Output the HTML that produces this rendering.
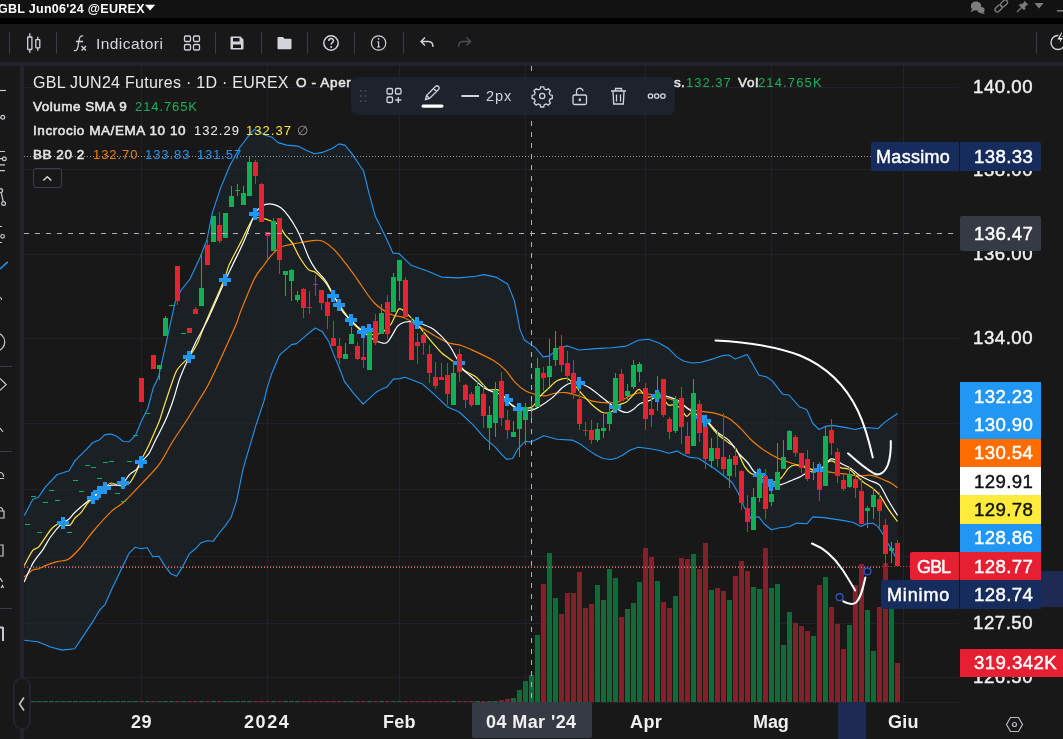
<!DOCTYPE html><html><head><meta charset="utf-8"><title>GBL</title><style>
*{box-sizing:border-box}
html,body{margin:0;padding:0}
body{width:1063px;height:739px;overflow:hidden;background:#181818;font-family:"Liberation Sans",sans-serif;color:#fff;position:relative}
.abs{position:absolute}
#g{position:absolute;left:0;top:0}
.dv{position:absolute;top:32px;width:1px;height:22px;background:#3a3c47}
.t{position:absolute;white-space:nowrap;will-change:transform}
.bx{position:absolute}
</style></head><body>
<div class="bx" style="left:0;top:0;width:1063px;height:18px;background:#121212"></div>
<div class="bx" style="left:0;top:18px;width:1063px;height:6px;background:#000"></div>
<div class="dv" style="left:9px"></div>
<div class="dv" style="left:56px"></div>
<div class="dv" style="left:215px"></div>
<div class="dv" style="left:261px"></div>
<div class="dv" style="left:307px"></div>
<div class="dv" style="left:354px"></div>
<div class="dv" style="left:403px"></div>
<div class="dv" style="left:1036px"></div>
<div class="bx" style="left:0;top:62px;width:1063px;height:4px;background:#23222d"></div><div class="bx" style="left:20px;top:62px;width:4px;height:677px;background:#23222d"></div>
<svg id="g" width="1063" height="739" viewBox="0 0 1063 739">
<defs><clipPath id="cp"><rect x="24" y="66" width="935" height="636"/></clipPath></defs>
<g clip-path="url(#cp)">
<polygon points="24.2,515.7 32.7,499.6 38.6,497.0 45.4,486.9 57.2,474.5 69.1,470.8 75.0,460.6 86.9,448.8 92.8,442.5 98.7,440.3 104.7,434.9 110.6,433.9 116.5,436.1 123.3,441.5 129.2,441.7 135.6,435.3 141.2,421.5 147.7,408.5 153.4,387.4 158.6,376.5 167.2,338.2 175.2,302.0 181.2,290.0 190.0,279.0 200.2,257.0 206.9,240.0 212.3,212.8 220.8,187.4 230.0,165.2 239.8,147.5 249.6,134.7 254.5,129.4 259.4,131.8 265.3,135.3 272.2,137.3 278.1,142.6 286.9,145.1 297.7,146.1 306.6,150.4 314.4,153.8 322.3,152.4 332.1,148.5 339.0,143.9 344.8,145.1 351.7,153.4 363.5,171.0 369.4,194.6 375.3,216.2 385.1,235.8 392.9,253.1 398.8,253.5 411.1,265.2 428.0,271.2 441.6,277.1 458.5,277.9 475.5,276.2 483.9,274.6 495.8,277.1 507.6,283.9 514.4,300.8 520.0,329.6 524.4,340.0 535.5,347.6 543.1,356.9 549.0,356.1 559.2,347.6 567.6,345.9 578.9,350.0 595.9,348.6 611.1,347.8 626.4,346.1 638.2,340.2 648.4,339.3 658.5,342.7 668.7,348.6 677.1,357.1 683.9,361.3 692.4,363.0 700.9,362.2 712.4,359.1 722.8,355.6 729.0,355.0 735.2,359.1 747.2,354.6 759.0,375.3 766.2,376.7 772.4,380.9 782.8,394.3 789.0,395.0 799.3,406.7 806.6,409.4 812.8,423.3 819.0,429.5 825.2,426.4 832.4,425.4 844.9,427.4 855.2,429.5 863.5,427.4 878.0,428.5 885.2,421.9 897.5,413.5 897.5,561.0 891.6,549.4 887.4,542.6 882.3,533.3 878.0,526.6 873.0,523.2 866.2,523.7 861.1,526.6 852.7,522.3 840.8,520.1 823.9,517.6 812.9,516.9 806.8,523.8 796.7,523.1 789.1,526.8 779.7,527.7 771.3,529.7 764.5,524.3 758.6,516.7 751.0,518.4 744.2,507.4 738.3,493.0 732.3,482.8 723.9,476.0 715.4,469.3 706.9,463.8 698.5,458.3 690.0,457.4 683.9,455.0 677.1,451.1 668.7,453.3 658.5,450.2 648.4,448.5 638.2,447.2 629.7,450.2 623.0,455.0 617.0,458.0 611.0,459.5 603.0,458.5 595.9,455.0 589.1,450.6 580.6,444.3 572.2,440.1 556.9,439.2 543.9,435.7 531.2,442.1 525.3,441.3 517.7,449.2 512.6,458.5 506.7,459.4 501.6,454.3 494.8,446.7 484.7,438.2 472.8,424.7 459.3,412.0 447.4,406.9 433.9,394.2 422.0,383.7 405.1,377.3 400.0,378.6 393.4,379.1 387.0,386.9 381.9,388.9 375.4,392.8 363.1,404.1 353.6,393.3 344.6,381.7 338.2,365.0 333.9,355.1 328.8,341.6 322.1,331.4 315.3,328.0 306.8,334.8 296.7,343.6 291.6,344.6 281.4,353.4 279.0,356.2 271.5,374.3 267.4,386.9 264.0,401.0 255.9,425.4 243.0,469.1 236.8,500.0 231.2,517.3 225.6,525.4 219.7,532.5 213.3,541.2 207.0,540.7 201.1,542.7 195.5,548.8 189.2,553.9 182.8,566.6 176.7,576.3 170.9,573.8 165.0,566.1 158.9,556.2 152.8,556.7 147.2,547.8 140.8,548.8 135.0,547.3 128.9,553.4 118.0,576.3 111.6,589.5 105.2,604.3 99.4,610.4 93.8,620.1 81.0,639.4 74.7,648.8 62.0,650.1 50.5,647.0 37.8,641.7 24.2,640.2" fill="#1b2025"/>
<g stroke="#22212c" stroke-width="1" shape-rendering="crispEdges">
<line x1="24" x2="959" y1="87.5" y2="87.5"/>
<line x1="24" x2="959" y1="169.5" y2="169.5"/>
<line x1="24" x2="959" y1="254.5" y2="254.5"/>
<line x1="24" x2="959" y1="338.5" y2="338.5"/>
<line x1="24" x2="959" y1="423.5" y2="423.5"/>
<line x1="24" x2="959" y1="489.5" y2="489.5"/>
<line x1="24" x2="959" y1="556.5" y2="556.5"/>
<line x1="24" x2="959" y1="623.5" y2="623.5"/>
<line x1="24" x2="959" y1="677.5" y2="677.5"/>
<line x1="141.5" x2="141.5" y1="66" y2="702"/>
<line x1="267.5" x2="267.5" y1="66" y2="702"/>
<line x1="399.5" x2="399.5" y1="66" y2="702"/>
<line x1="525.5" x2="525.5" y1="66" y2="702"/>
<line x1="645.5" x2="645.5" y1="66" y2="702"/>
<line x1="771.5" x2="771.5" y1="66" y2="702"/>
<line x1="903.5" x2="903.5" y1="66" y2="702"/>
</g>
<g shape-rendering="crispEdges">
<rect x="25" y="701" width="5" height="1" fill="#12693a"/>
<rect x="31" y="701" width="5" height="1" fill="#12693a"/>
<rect x="37" y="701" width="5" height="1" fill="#12693a"/>
<rect x="43" y="701" width="5" height="1" fill="#12693a"/>
<rect x="49" y="701" width="5" height="1" fill="#12693a"/>
<rect x="55" y="701" width="5" height="1" fill="#12693a"/>
<rect x="61" y="701" width="5" height="1" fill="#12693a"/>
<rect x="67" y="701" width="5" height="1" fill="#12693a"/>
<rect x="73" y="701" width="5" height="1" fill="#12693a"/>
<rect x="79" y="701" width="5" height="1" fill="#12693a"/>
<rect x="85" y="701" width="5" height="1" fill="#12693a"/>
<rect x="91" y="701" width="5" height="1" fill="#12693a"/>
<rect x="97" y="701" width="5" height="1" fill="#12693a"/>
<rect x="103" y="701" width="5" height="1" fill="#12693a"/>
<rect x="109" y="701" width="5" height="1" fill="#12693a"/>
<rect x="115" y="701" width="5" height="1" fill="#12693a"/>
<rect x="121" y="701" width="5" height="1" fill="#12693a"/>
<rect x="127" y="701" width="5" height="1" fill="#12693a"/>
<rect x="133" y="701" width="5" height="1" fill="#12693a"/>
<rect x="139" y="701" width="5" height="1" fill="#82202b"/>
<rect x="145" y="701" width="5" height="1" fill="#12693a"/>
<rect x="151" y="701" width="5" height="1" fill="#82202b"/>
<rect x="157" y="701" width="5" height="1" fill="#12693a"/>
<rect x="163" y="701" width="5" height="1" fill="#12693a"/>
<rect x="169" y="701" width="5" height="1" fill="#12693a"/>
<rect x="175" y="701" width="5" height="1" fill="#82202b"/>
<rect x="181" y="701" width="5" height="1" fill="#12693a"/>
<rect x="187" y="701" width="5" height="1" fill="#82202b"/>
<rect x="193" y="701" width="5" height="1" fill="#82202b"/>
<rect x="199" y="701" width="5" height="1" fill="#12693a"/>
<rect x="205" y="701" width="5" height="1" fill="#82202b"/>
<rect x="211" y="701" width="5" height="1" fill="#12693a"/>
<rect x="217" y="701" width="5" height="1" fill="#82202b"/>
<rect x="223" y="701" width="5" height="1" fill="#12693a"/>
<rect x="229" y="701" width="5" height="1" fill="#12693a"/>
<rect x="235" y="701" width="5" height="1" fill="#12693a"/>
<rect x="241" y="701" width="5" height="1" fill="#12693a"/>
<rect x="247" y="701" width="5" height="1" fill="#12693a"/>
<rect x="253" y="701" width="5" height="1" fill="#82202b"/>
<rect x="259" y="701" width="5" height="1" fill="#82202b"/>
<rect x="265" y="701" width="5" height="1" fill="#82202b"/>
<rect x="271" y="701" width="5" height="1" fill="#12693a"/>
<rect x="277" y="701" width="5" height="1" fill="#82202b"/>
<rect x="283" y="701" width="5" height="1" fill="#12693a"/>
<rect x="289" y="701" width="5" height="1" fill="#12693a"/>
<rect x="295" y="701" width="5" height="1" fill="#12693a"/>
<rect x="301" y="701" width="5" height="1" fill="#82202b"/>
<rect x="307" y="701" width="5" height="1" fill="#82202b"/>
<rect x="313" y="701" width="5" height="1" fill="#82202b"/>
<rect x="319" y="701" width="5" height="1" fill="#82202b"/>
<rect x="325" y="701" width="5" height="1" fill="#82202b"/>
<rect x="331" y="701" width="5" height="1" fill="#82202b"/>
<rect x="337" y="701" width="5" height="1" fill="#82202b"/>
<rect x="343" y="701" width="5" height="1" fill="#12693a"/>
<rect x="349" y="701" width="5" height="1" fill="#12693a"/>
<rect x="355" y="701" width="5" height="1" fill="#82202b"/>
<rect x="361" y="701" width="5" height="1" fill="#82202b"/>
<rect x="367" y="701" width="5" height="1" fill="#12693a"/>
<rect x="373" y="701" width="5" height="1" fill="#82202b"/>
<rect x="379" y="701" width="5" height="1" fill="#12693a"/>
<rect x="385" y="701" width="5" height="1" fill="#82202b"/>
<rect x="391" y="701" width="5" height="1" fill="#12693a"/>
<rect x="397" y="701" width="5" height="1" fill="#12693a"/>
<rect x="403" y="701" width="5" height="1" fill="#82202b"/>
<rect x="409" y="701" width="5" height="1" fill="#82202b"/>
<rect x="415" y="701" width="5" height="1" fill="#82202b"/>
<rect x="421" y="701" width="5" height="1" fill="#82202b"/>
<rect x="427" y="701" width="5" height="1" fill="#82202b"/>
<rect x="433" y="701" width="5" height="1" fill="#82202b"/>
<rect x="439" y="701" width="5" height="1" fill="#82202b"/>
<rect x="445" y="701" width="5" height="1" fill="#82202b"/>
<rect x="451" y="701" width="5" height="1" fill="#12693a"/>
<rect x="457" y="701" width="5" height="1" fill="#82202b"/>
<rect x="463" y="701" width="5" height="1" fill="#82202b"/>
<rect x="469" y="701" width="5" height="1" fill="#82202b"/>
<rect x="475" y="701" width="5" height="1" fill="#12693a"/>
<rect x="481" y="701" width="5" height="1" fill="#82202b"/>
<rect x="487" y="701" width="5" height="1" fill="#12693a"/>
<rect x="493" y="701" width="5" height="1" fill="#12693a"/>
<rect x="499" y="700" width="5" height="2" fill="#82202b"/>
<rect x="505" y="699" width="5" height="3" fill="#82202b"/>
<rect x="511" y="698" width="5" height="4" fill="#12693a"/>
<rect x="517" y="690" width="5" height="12" fill="#12693a"/>
<rect x="523" y="681" width="5" height="21" fill="#12693a"/>
<rect x="529" y="675" width="5" height="27" fill="#12693a"/>
<rect x="535" y="635" width="5" height="67" fill="#12693a"/>
<rect x="541" y="584" width="5" height="118" fill="#82202b"/>
<rect x="547" y="553" width="5" height="149" fill="#12693a"/>
<rect x="553" y="598" width="5" height="104" fill="#12693a"/>
<rect x="559" y="614" width="5" height="88" fill="#82202b"/>
<rect x="565" y="593" width="5" height="109" fill="#82202b"/>
<rect x="571" y="593" width="5" height="109" fill="#82202b"/>
<rect x="577" y="572" width="5" height="130" fill="#82202b"/>
<rect x="583" y="608" width="5" height="94" fill="#82202b"/>
<rect x="589" y="604" width="5" height="98" fill="#82202b"/>
<rect x="595" y="585" width="5" height="117" fill="#12693a"/>
<rect x="601" y="600" width="5" height="102" fill="#12693a"/>
<rect x="607" y="569" width="5" height="133" fill="#12693a"/>
<rect x="613" y="578" width="5" height="124" fill="#12693a"/>
<rect x="619" y="617" width="5" height="85" fill="#82202b"/>
<rect x="625" y="609" width="5" height="93" fill="#12693a"/>
<rect x="631" y="603" width="5" height="99" fill="#12693a"/>
<rect x="637" y="582" width="5" height="120" fill="#12693a"/>
<rect x="643" y="548" width="5" height="154" fill="#82202b"/>
<rect x="649" y="557" width="5" height="145" fill="#82202b"/>
<rect x="655" y="581" width="5" height="121" fill="#12693a"/>
<rect x="661" y="602" width="5" height="100" fill="#82202b"/>
<rect x="667" y="608" width="5" height="94" fill="#82202b"/>
<rect x="673" y="596" width="5" height="106" fill="#12693a"/>
<rect x="679" y="558" width="5" height="144" fill="#82202b"/>
<rect x="685" y="559" width="5" height="143" fill="#82202b"/>
<rect x="691" y="554" width="5" height="148" fill="#12693a"/>
<rect x="697" y="569" width="5" height="133" fill="#82202b"/>
<rect x="703" y="543" width="5" height="159" fill="#82202b"/>
<rect x="709" y="590" width="5" height="112" fill="#12693a"/>
<rect x="715" y="588" width="5" height="114" fill="#82202b"/>
<rect x="721" y="591" width="5" height="111" fill="#82202b"/>
<rect x="727" y="600" width="5" height="102" fill="#12693a"/>
<rect x="733" y="576" width="5" height="126" fill="#82202b"/>
<rect x="739" y="561" width="5" height="141" fill="#82202b"/>
<rect x="745" y="571" width="5" height="131" fill="#82202b"/>
<rect x="751" y="587" width="5" height="115" fill="#12693a"/>
<rect x="757" y="589" width="5" height="113" fill="#12693a"/>
<rect x="763" y="548" width="5" height="154" fill="#82202b"/>
<rect x="769" y="588" width="5" height="114" fill="#12693a"/>
<rect x="775" y="584" width="5" height="118" fill="#12693a"/>
<rect x="781" y="645" width="5" height="57" fill="#12693a"/>
<rect x="787" y="612" width="5" height="90" fill="#12693a"/>
<rect x="793" y="623" width="5" height="79" fill="#82202b"/>
<rect x="799" y="626" width="5" height="76" fill="#82202b"/>
<rect x="805" y="631" width="5" height="71" fill="#82202b"/>
<rect x="811" y="636" width="5" height="66" fill="#12693a"/>
<rect x="817" y="585" width="5" height="117" fill="#82202b"/>
<rect x="823" y="577" width="5" height="125" fill="#12693a"/>
<rect x="829" y="607" width="5" height="95" fill="#82202b"/>
<rect x="835" y="624" width="5" height="78" fill="#82202b"/>
<rect x="841" y="649" width="5" height="53" fill="#82202b"/>
<rect x="847" y="625" width="5" height="77" fill="#12693a"/>
<rect x="853" y="585" width="5" height="117" fill="#82202b"/>
<rect x="859" y="564" width="5" height="138" fill="#82202b"/>
<rect x="865" y="610" width="5" height="92" fill="#12693a"/>
<rect x="871" y="651" width="5" height="51" fill="#12693a"/>
<rect x="877" y="607" width="5" height="95" fill="#82202b"/>
<rect x="883" y="563" width="5" height="139" fill="#82202b"/>
<rect x="889" y="607" width="5" height="95" fill="#12693a"/>
<rect x="895" y="663" width="5" height="39" fill="#82202b"/>
</g>
<polyline points="24.2,515.7 32.7,499.6 38.6,497.0 45.4,486.9 57.2,474.5 69.1,470.8 75.0,460.6 86.9,448.8 92.8,442.5 98.7,440.3 104.7,434.9 110.6,433.9 116.5,436.1 123.3,441.5 129.2,441.7 135.6,435.3 141.2,421.5 147.7,408.5 153.4,387.4 158.6,376.5 167.2,338.2 175.2,302.0 181.2,290.0 190.0,279.0 200.2,257.0 206.9,240.0 212.3,212.8 220.8,187.4 230.0,165.2 239.8,147.5 249.6,134.7 254.5,129.4 259.4,131.8 265.3,135.3 272.2,137.3 278.1,142.6 286.9,145.1 297.7,146.1 306.6,150.4 314.4,153.8 322.3,152.4 332.1,148.5 339.0,143.9 344.8,145.1 351.7,153.4 363.5,171.0 369.4,194.6 375.3,216.2 385.1,235.8 392.9,253.1 398.8,253.5 411.1,265.2 428.0,271.2 441.6,277.1 458.5,277.9 475.5,276.2 483.9,274.6 495.8,277.1 507.6,283.9 514.4,300.8 520.0,329.6 524.4,340.0 535.5,347.6 543.1,356.9 549.0,356.1 559.2,347.6 567.6,345.9 578.9,350.0 595.9,348.6 611.1,347.8 626.4,346.1 638.2,340.2 648.4,339.3 658.5,342.7 668.7,348.6 677.1,357.1 683.9,361.3 692.4,363.0 700.9,362.2 712.4,359.1 722.8,355.6 729.0,355.0 735.2,359.1 747.2,354.6 759.0,375.3 766.2,376.7 772.4,380.9 782.8,394.3 789.0,395.0 799.3,406.7 806.6,409.4 812.8,423.3 819.0,429.5 825.2,426.4 832.4,425.4 844.9,427.4 855.2,429.5 863.5,427.4 878.0,428.5 885.2,421.9 897.5,413.5" fill="none" stroke="#2196f3" stroke-width="1.1" stroke-linejoin="round"/>
<polyline points="24.2,640.2 37.8,641.7 50.5,647.0 62.0,650.1 74.7,648.8 81.0,639.4 93.8,620.1 99.4,610.4 105.2,604.3 111.6,589.5 118.0,576.3 128.9,553.4 135.0,547.3 140.8,548.8 147.2,547.8 152.8,556.7 158.9,556.2 165.0,566.1 170.9,573.8 176.7,576.3 182.8,566.6 189.2,553.9 195.5,548.8 201.1,542.7 207.0,540.7 213.3,541.2 219.7,532.5 225.6,525.4 231.2,517.3 236.8,500.0 243.0,469.1 255.9,425.4 264.0,401.0 267.4,386.9 271.5,374.3 279.0,356.2 281.4,353.4 291.6,344.6 296.7,343.6 306.8,334.8 315.3,328.0 322.1,331.4 328.8,341.6 333.9,355.1 338.2,365.0 344.6,381.7 353.6,393.3 363.1,404.1 375.4,392.8 381.9,388.9 387.0,386.9 393.4,379.1 400.0,378.6 405.1,377.3 422.0,383.7 433.9,394.2 447.4,406.9 459.3,412.0 472.8,424.7 484.7,438.2 494.8,446.7 501.6,454.3 506.7,459.4 512.6,458.5 517.7,449.2 525.3,441.3 531.2,442.1 543.9,435.7 556.9,439.2 572.2,440.1 580.6,444.3 589.1,450.6 595.9,455.0 603.0,458.5 611.0,459.5 617.0,458.0 623.0,455.0 629.7,450.2 638.2,447.2 648.4,448.5 658.5,450.2 668.7,453.3 677.1,451.1 683.9,455.0 690.0,457.4 698.5,458.3 706.9,463.8 715.4,469.3 723.9,476.0 732.3,482.8 738.3,493.0 744.2,507.4 751.0,518.4 758.6,516.7 764.5,524.3 771.3,529.7 779.7,527.7 789.1,526.8 796.7,523.1 806.8,523.8 812.9,516.9 823.9,517.6 840.8,520.1 852.7,522.3 861.1,526.6 866.2,523.7 873.0,523.2 878.0,526.6 882.3,533.3 887.4,542.6 891.6,549.4 897.5,561.0" fill="none" stroke="#2196f3" stroke-width="1.1" stroke-linejoin="round"/>
<path d="M24.2,577.0 C25.6,575.8 30.2,571.4 32.7,570.0 C35.2,568.6 36.9,569.4 39.0,568.7 C41.1,568.0 42.4,566.8 45.4,565.6 C48.4,564.4 53.1,562.7 56.9,561.6 C60.7,560.5 64.3,561.7 68.3,559.3 C72.3,556.9 76.8,551.8 81.0,547.0 C85.2,542.2 88.7,536.4 93.8,530.5 C98.9,524.6 106.5,516.1 111.4,511.4 C116.3,506.7 118.4,507.0 123.3,502.5 C128.2,498.0 135.1,490.6 141.0,484.3 C146.9,478.0 153.6,471.9 158.8,464.9 C164.0,457.8 167.7,449.5 172.4,442.0 C177.1,434.5 182.5,426.8 186.8,420.0 C191.2,413.2 194.9,406.9 198.5,401.0 C202.1,395.1 204.4,392.3 208.3,384.8 C212.2,377.3 217.3,366.0 221.8,356.2 C226.3,346.4 232.2,333.6 235.4,326.1 C238.6,318.6 237.7,319.0 240.8,311.1 C244.0,303.2 250.4,286.6 254.3,278.9 C258.2,271.2 261.1,269.0 264.0,265.0 C266.9,261.0 268.6,258.1 271.6,255.1 C274.6,252.0 277.3,248.7 281.8,246.7 C286.3,244.7 292.8,244.1 298.4,243.0 C304.0,241.9 311.1,240.5 315.3,240.3 C319.5,240.1 320.7,240.2 323.8,241.7 C326.9,243.2 330.2,245.6 333.9,249.3 C337.6,253.0 342.0,258.8 345.8,263.7 C349.6,268.6 352.2,272.3 356.9,278.8 C361.6,285.3 368.2,296.6 373.9,302.5 C379.5,308.4 385.7,311.8 390.8,314.3 C395.9,316.8 400.1,316.0 404.3,317.7 C408.5,319.4 411.4,321.7 416.2,324.5 C421.0,327.3 427.7,331.6 433.1,334.7 C438.5,337.8 443.6,341.0 448.4,342.8 C453.2,344.6 457.3,344.2 461.9,345.7 C466.5,347.2 471.0,349.5 476.2,351.9 C481.4,354.3 488.3,357.4 493.1,360.3 C497.9,363.2 501.3,365.9 505.0,369.6 C508.7,373.3 511.7,378.8 515.1,382.3 C518.5,385.8 521.9,388.8 525.3,390.8 C528.7,392.8 532.1,393.6 535.5,394.5 C538.9,395.4 542.6,396.1 545.6,395.9 C548.6,395.7 550.2,394.1 553.5,393.5 C556.8,392.9 561.2,392.2 565.4,392.6 C569.6,393.0 574.4,394.6 578.9,396.0 C583.4,397.4 587.7,400.0 592.5,401.1 C597.3,402.2 603.5,402.7 607.7,402.8 C611.9,402.9 614.2,403.1 617.9,402.0 C621.6,400.9 626.3,397.5 629.7,396.0 C633.1,394.5 635.1,393.3 638.2,393.0 C641.3,392.7 644.5,393.4 648.4,394.0 C652.3,394.6 657.4,395.7 661.9,396.9 C666.4,398.1 671.0,399.1 675.5,401.1 C680.0,403.1 684.6,407.0 689.0,408.7 C693.4,410.4 697.5,410.6 701.9,411.4 C706.3,412.2 710.9,412.2 715.4,413.4 C719.9,414.6 724.7,416.0 728.9,418.5 C733.1,421.0 736.8,424.8 740.8,428.6 C744.8,432.4 748.6,437.6 752.6,441.3 C756.6,445.0 760.3,447.8 764.5,450.6 C768.7,453.4 773.8,456.3 778.0,458.3 C782.2,460.3 785.9,461.1 789.9,462.5 C793.9,463.9 798.1,465.6 801.8,466.7 C805.5,467.8 808.2,468.5 811.9,469.3 C815.6,470.1 819.8,470.7 823.8,471.3 C827.8,471.9 831.6,472.5 835.6,473.0 C839.6,473.5 843.5,473.8 847.5,474.3 C851.5,474.8 855.5,475.9 859.3,476.0 C863.0,476.1 867.0,475.0 870.0,475.2 C873.0,475.4 874.7,476.2 877.0,477.0 C879.3,477.8 881.6,478.9 884.0,480.0 C886.4,481.1 889.4,482.1 891.6,483.4 C893.9,484.7 896.5,487.1 897.5,487.8" fill="none" stroke="#f57c00" stroke-width="1.2" stroke-linejoin="round"/>
<path d="M24.2,565.6 C25.2,563.8 31.0,552.6 32.7,550.4 C34.4,548.2 36.9,549.0 39.0,546.6 C41.1,544.2 48.3,532.6 50.5,530.0 C52.7,527.4 56.0,524.7 58.2,524.2 C60.4,523.7 67.7,526.1 69.6,525.4 C71.5,524.7 73.4,519.8 74.7,518.3 C76.0,516.8 79.5,514.5 81.0,512.7 C82.5,510.9 86.3,504.7 87.7,503.0 C89.1,501.3 91.1,499.7 93.1,497.9 C95.1,496.1 102.6,489.4 104.7,487.7 C106.8,486.0 109.4,483.2 111.4,483.0 C113.4,482.8 119.4,486.0 121.6,486.0 C123.8,486.0 128.2,484.4 130.0,482.6 C131.8,480.8 135.5,473.4 136.8,470.8 C138.1,468.2 139.5,463.6 140.9,460.6 C142.3,457.6 147.0,449.0 148.7,445.4 C150.4,441.8 154.2,433.0 155.5,430.0 C156.8,427.0 158.5,423.4 159.7,420.0 C160.9,416.6 163.8,406.8 165.8,401.0 C167.8,395.2 174.0,375.6 176.7,370.5 C179.4,365.4 186.6,360.2 189.0,357.0 C191.4,353.8 195.6,347.1 197.7,342.7 C199.8,338.3 203.8,326.8 206.9,319.6 C210.0,312.4 221.3,286.9 223.9,280.6 C226.5,274.3 226.9,269.9 228.9,265.4 C230.9,260.8 238.3,247.0 241.1,241.6 C243.9,236.2 250.4,221.4 253.0,218.7 C255.6,216.0 260.9,218.4 263.1,218.7 C265.3,219.0 269.8,220.6 271.6,221.3 C273.4,222.0 276.8,223.1 278.4,224.7 C280.0,226.3 283.5,232.7 285.1,234.8 C286.7,236.9 290.3,240.0 291.9,242.4 C293.5,244.8 296.5,252.0 298.4,255.2 C300.3,258.4 306.5,267.6 308.5,269.6 C310.5,271.6 313.3,270.7 315.3,272.2 C317.3,273.7 323.4,279.6 325.5,282.3 C327.6,285.0 331.1,291.8 333.1,295.0 C335.1,298.2 340.3,306.4 342.4,309.4 C344.5,312.4 348.6,318.5 351.0,321.1 C353.4,323.7 360.7,330.5 362.9,332.1 C365.1,333.7 367.9,334.4 370.0,334.5 C372.1,334.6 378.2,334.5 380.6,333.3 C383.0,332.1 388.7,327.3 390.8,324.5 C392.9,321.7 397.0,311.0 398.4,309.3 C399.8,307.6 401.5,309.5 402.6,310.1 C403.7,310.7 406.0,312.6 407.7,314.3 C409.4,316.0 414.7,321.3 417.5,324.5 C420.3,327.7 428.5,338.0 431.4,341.4 C434.3,344.8 439.6,351.1 442.3,353.5 C445.0,355.9 451.6,360.0 454.2,362.0 C456.8,364.0 461.7,368.7 464.3,370.5 C466.9,372.3 473.4,375.0 476.2,377.2 C479.0,379.4 485.4,387.9 488.0,389.4 C490.6,390.9 495.8,388.6 498.2,390.0 C500.6,391.4 506.2,399.6 508.4,401.8 C510.6,404.0 514.0,408.0 516.8,408.6 C519.6,409.2 529.3,408.4 532.1,406.9 C534.9,405.4 538.6,398.1 540.5,395.9 C542.4,393.7 546.6,390.2 548.5,388.4 C550.4,386.6 554.7,382.0 556.9,380.8 C559.1,379.6 565.1,377.9 567.1,378.3 C569.1,378.7 572.1,382.3 573.9,384.2 C575.7,386.1 580.1,391.8 582.3,394.3 C584.5,396.8 590.1,403.2 592.5,405.3 C594.9,407.4 600.5,411.7 602.7,412.5 C604.9,413.3 609.3,412.9 611.1,412.1 C612.9,411.3 616.1,406.5 617.9,405.3 C619.7,404.1 624.6,403.2 626.4,402.0 C628.2,400.8 631.6,396.7 633.1,395.2 C634.6,393.7 637.5,389.1 639.1,389.3 C640.7,389.5 644.6,396.1 646.7,396.9 C648.8,397.7 654.8,395.7 656.8,396.0 C658.8,396.3 662.2,398.3 663.6,399.4 C665.0,400.5 667.3,404.7 668.7,405.3 C670.1,405.9 674.1,404.1 675.5,404.5 C676.9,404.9 679.2,407.3 680.5,408.7 C681.8,410.1 685.3,415.8 686.5,416.3 C687.7,416.8 689.6,413.2 690.7,413.0 C691.8,412.8 694.1,413.9 695.8,414.7 C697.5,415.5 702.6,417.5 705.1,419.7 C707.6,421.9 714.3,431.0 717.1,433.7 C719.9,436.4 726.7,441.3 728.9,443.0 C731.1,444.7 733.9,445.4 735.7,448.1 C737.5,450.8 742.4,462.9 744.2,465.9 C746.0,468.9 748.8,472.2 751.0,473.5 C753.2,474.8 760.2,475.9 762.8,476.9 C765.4,477.9 770.8,481.9 773.0,482.0 C775.2,482.1 779.6,479.3 781.4,477.7 C783.2,476.1 786.6,469.9 788.2,468.4 C789.8,466.9 793.0,465.2 795.0,465.0 C797.0,464.8 802.9,466.1 805.1,466.7 C807.3,467.3 811.6,469.9 813.6,470.1 C815.6,470.3 820.3,469.4 822.1,468.4 C823.9,467.4 827.4,462.4 828.8,461.6 C830.2,460.8 832.5,460.9 833.9,461.6 C835.3,462.3 838.9,466.7 840.7,467.6 C842.5,468.5 847.4,468.4 849.2,469.3 C851.0,470.2 854.3,473.8 855.9,475.2 C857.5,476.6 860.8,480.1 862.8,481.7 C864.8,483.3 871.0,486.9 873.0,488.5 C875.0,490.1 877.9,492.8 879.7,495.2 C881.5,497.6 886.1,505.7 888.2,508.8 C890.3,511.9 896.4,520.0 897.5,521.5" fill="none" stroke="#ffe53b" stroke-width="1.2" stroke-linejoin="round"/>
<path d="M24.2,582.0 C25.3,579.5 30.2,567.9 32.7,563.6 C35.2,559.3 40.5,553.1 42.9,549.6 C45.3,546.1 48.0,540.5 50.5,537.0 C53.0,533.5 59.5,525.8 62.0,523.4 C64.5,521.0 67.4,520.5 69.1,519.0 C70.8,517.5 72.5,514.7 75.0,512.3 C77.5,509.9 83.7,504.6 87.7,501.3 C91.7,498.0 101.5,489.8 104.7,487.7 C107.9,485.6 109.1,485.7 111.4,485.2 C113.7,484.7 119.1,485.8 121.6,484.3 C124.1,482.8 128.0,476.2 130.0,474.2 C132.0,472.2 135.3,470.7 136.8,469.1 C138.3,467.5 139.3,464.0 140.9,462.0 C142.5,460.0 146.8,456.8 148.7,453.9 C150.6,451.0 153.2,444.8 155.5,440.3 C157.8,435.8 163.3,425.2 165.6,420.0 C167.9,414.8 171.0,406.5 172.9,401.0 C174.8,395.5 177.6,384.7 179.7,378.8 C181.8,372.9 186.8,362.0 189.0,357.0 C191.2,352.0 193.8,346.0 196.2,341.2 C198.6,336.4 203.2,329.0 206.9,321.3 C210.6,313.6 220.5,290.7 223.9,283.2 C227.3,275.7 229.9,270.8 232.6,265.0 C235.3,259.2 241.7,246.4 244.5,239.9 C247.3,233.4 251.8,220.5 253.8,216.2 C255.8,211.9 258.1,209.3 259.7,207.7 C261.3,206.1 263.9,204.8 265.7,204.3 C267.5,203.8 271.3,203.8 273.3,204.3 C275.3,204.8 278.9,206.1 280.9,207.7 C282.9,209.3 286.4,213.3 288.5,216.2 C290.6,219.1 295.2,226.5 297.0,229.7 C298.8,232.9 300.2,236.4 301.7,240.0 C303.2,243.6 306.7,253.1 308.5,256.9 C310.3,260.7 313.0,265.6 315.3,268.8 C317.6,272.0 323.1,277.2 325.5,280.6 C327.9,284.0 330.8,290.1 333.1,294.2 C335.4,298.3 340.0,307.6 342.4,311.1 C344.8,314.6 348.3,317.6 351.0,320.3 C353.7,323.0 359.8,328.7 362.9,331.3 C366.0,333.9 370.7,338.2 373.9,339.7 C377.1,341.2 383.4,344.6 386.6,342.8 C389.8,341.0 395.1,329.0 397.6,326.2 C400.1,323.4 402.5,322.5 405.2,322.0 C407.9,321.5 414.0,322.0 417.5,322.8 C421.0,323.6 428.2,326.1 431.4,327.9 C434.6,329.7 439.1,333.9 441.6,336.4 C444.1,338.9 448.1,343.6 450.1,346.5 C452.1,349.4 455.1,355.4 456.8,358.4 C458.5,361.4 460.5,366.2 462.6,368.8 C464.7,371.4 469.9,375.5 472.8,378.1 C475.7,380.7 482.1,386.5 484.7,388.3 C487.3,390.1 490.0,390.7 492.3,391.6 C494.6,392.5 499.2,393.4 501.6,395.0 C504.0,396.6 507.8,401.7 510.1,403.5 C512.4,405.3 515.8,407.7 518.5,408.6 C521.2,409.5 527.7,410.5 530.4,410.3 C533.1,410.1 535.9,408.6 538.8,406.9 C541.7,405.2 549.2,400.2 552.4,397.6 C555.6,395.0 559.9,389.4 562.5,387.4 C565.1,385.4 570.0,383.0 572.2,382.5 C574.4,382.0 577.0,382.6 579.3,383.3 C581.6,384.0 586.4,386.0 589.1,387.6 C591.8,389.2 596.4,392.9 599.3,395.2 C602.2,397.5 608.4,402.5 611.1,404.5 C613.8,406.5 617.5,409.3 619.6,410.4 C621.7,411.5 625.4,412.6 627.2,412.5 C629.0,412.4 631.4,410.8 633.1,409.6 C634.8,408.4 637.6,404.9 639.9,403.7 C642.2,402.5 647.6,401.4 650.1,400.3 C652.6,399.2 656.0,395.7 658.5,395.2 C661.0,394.7 666.0,396.1 668.7,396.9 C671.4,397.7 676.1,399.4 678.8,401.1 C681.5,402.8 686.5,407.8 689.0,409.6 C691.5,411.4 695.4,413.5 697.5,414.7 C699.6,415.9 702.5,416.6 705.1,418.9 C707.7,421.2 713.9,429.1 717.1,432.0 C720.3,434.9 726.0,437.6 728.9,440.5 C731.8,443.4 736.6,451.1 739.1,454.0 C741.6,456.9 745.6,460.1 747.6,462.5 C749.6,464.9 752.3,469.9 754.3,471.8 C756.3,473.7 760.5,475.4 762.8,476.9 C765.1,478.4 769.0,481.7 771.3,482.8 C773.6,483.9 777.2,485.0 779.7,484.8 C782.2,484.6 787.2,482.2 789.9,481.1 C792.6,480.0 797.6,478.1 800.1,476.9 C802.6,475.7 806.0,472.7 808.5,471.8 C811.0,470.9 816.4,471.1 818.7,470.1 C821.0,469.1 823.9,465.7 825.5,464.2 C827.1,462.7 829.2,459.7 830.5,459.1 C831.8,458.5 834.0,459.2 835.6,459.9 C837.2,460.6 840.4,463.1 842.4,464.2 C844.4,465.3 848.6,466.9 850.9,468.4 C853.2,469.9 856.8,473.6 859.3,475.2 C861.8,476.8 866.9,479.2 869.6,480.5 C872.3,481.8 877.2,482.5 879.7,485.1 C882.2,487.7 885.8,496.2 888.2,500.3 C890.6,504.4 896.3,513.5 897.5,515.5" fill="none" stroke="#ffffff" stroke-width="1.2" stroke-linejoin="round"/>
<g fill="#2196f3" shape-rendering="crispEdges">
<rect x="57" y="521" width="12" height="4"/><rect x="61" y="517" width="4" height="12"/>
<rect x="87" y="496" width="12" height="4"/><rect x="91" y="492" width="4" height="12"/>
<rect x="93" y="490" width="12" height="4"/><rect x="97" y="486" width="4" height="12"/>
<rect x="99" y="486" width="12" height="4"/><rect x="103" y="482" width="4" height="12"/>
<rect x="117" y="481" width="12" height="4"/><rect x="121" y="477" width="4" height="12"/>
<rect x="135" y="460" width="12" height="4"/><rect x="139" y="456" width="4" height="12"/>
<rect x="183" y="355" width="12" height="4"/><rect x="187" y="351" width="4" height="12"/>
<rect x="219" y="278" width="12" height="4"/><rect x="223" y="274" width="4" height="12"/>
<rect x="249" y="212" width="12" height="4"/><rect x="253" y="208" width="4" height="12"/>
<rect x="327" y="294" width="12" height="4"/><rect x="331" y="290" width="4" height="12"/>
<rect x="333" y="303" width="12" height="4"/><rect x="337" y="299" width="4" height="12"/>
<rect x="345" y="318" width="12" height="4"/><rect x="349" y="314" width="4" height="12"/>
<rect x="357" y="330" width="12" height="4"/><rect x="361" y="326" width="4" height="12"/>
<rect x="363" y="328" width="12" height="4"/><rect x="367" y="324" width="4" height="12"/>
<rect x="411" y="321" width="12" height="4"/><rect x="415" y="317" width="4" height="12"/>
<rect x="453" y="361" width="12" height="4"/><rect x="457" y="357" width="4" height="12"/>
<rect x="501" y="398" width="12" height="4"/><rect x="505" y="394" width="4" height="12"/>
<rect x="513" y="407" width="12" height="4"/><rect x="517" y="403" width="4" height="12"/>
<rect x="573" y="381" width="12" height="4"/><rect x="577" y="377" width="4" height="12"/>
<rect x="609" y="405" width="12" height="4"/><rect x="613" y="401" width="4" height="12"/>
<rect x="651" y="394" width="12" height="4"/><rect x="655" y="390" width="4" height="12"/>
<rect x="693" y="415" width="12" height="4"/><rect x="697" y="411" width="4" height="12"/>
<rect x="699" y="419" width="12" height="4"/><rect x="703" y="415" width="4" height="12"/>
<rect x="753" y="473" width="12" height="4"/><rect x="757" y="469" width="4" height="12"/>
<rect x="759" y="479" width="12" height="4"/><rect x="763" y="475" width="4" height="12"/>
<rect x="765" y="483" width="12" height="4"/><rect x="769" y="479" width="4" height="12"/>
<rect x="813" y="468" width="12" height="4"/><rect x="817" y="464" width="4" height="12"/>
</g>
<g shape-rendering="crispEdges">
<rect x="25" y="524" width="5" height="1" fill="#0eb058"/>
<rect x="31" y="496" width="5" height="1" fill="#0eb058"/>
<rect x="37" y="532" width="5" height="1" fill="#0eb058"/>
<rect x="43" y="502" width="5" height="1" fill="#0eb058"/>
<rect x="49" y="490" width="5" height="1" fill="#0eb058"/>
<rect x="55" y="500" width="5" height="1" fill="#0eb058"/>
<rect x="61" y="524" width="5" height="1" fill="#0eb058"/>
<rect x="67" y="532" width="5" height="1" fill="#0eb058"/>
<rect x="73" y="480" width="5" height="1" fill="#0eb058"/>
<rect x="79" y="491" width="5" height="1" fill="#0eb058"/>
<rect x="85" y="465" width="5" height="1" fill="#0eb058"/>
<rect x="91" y="467" width="5" height="1" fill="#0eb058"/>
<rect x="97" y="478" width="5" height="1" fill="#0eb058"/>
<rect x="103" y="462" width="5" height="1" fill="#0eb058"/>
<rect x="109" y="461" width="5" height="1" fill="#0eb058"/>
<rect x="115" y="493" width="5" height="1" fill="#0eb058"/>
<rect x="121" y="501" width="5" height="1" fill="#0eb058"/>
<rect x="127" y="461" width="5" height="1" fill="#0eb058"/>
<rect x="133" y="435" width="5" height="1" fill="#0eb058"/>
<rect x="145" y="413" width="5" height="1" fill="#0eb058"/>
<rect x="169" y="305" width="5" height="1" fill="#0eb058"/>
<rect x="181" y="333" width="5" height="1" fill="#0eb058"/>
<rect x="141" y="378" width="1" height="24" fill="#e62334"/>
<rect x="139" y="378" width="5" height="24" fill="#e62334"/>
<rect x="153" y="355" width="1" height="14" fill="#e62334"/>
<rect x="151" y="355" width="5" height="14" fill="#e62334"/>
<rect x="159" y="365" width="1" height="15" fill="#0eb058"/>
<rect x="157" y="365" width="5" height="4" fill="#0eb058"/>
<rect x="165" y="316" width="1" height="20" fill="#0eb058"/>
<rect x="163" y="318" width="5" height="18" fill="#0eb058"/>
<rect x="177" y="266" width="1" height="39" fill="#e62334"/>
<rect x="175" y="266" width="5" height="35" fill="#e62334"/>
<rect x="189" y="328" width="1" height="5" fill="#e62334"/>
<rect x="187" y="328" width="5" height="5" fill="#e62334"/>
<rect x="195" y="307" width="1" height="7" fill="#e62334"/>
<rect x="193" y="309" width="5" height="5" fill="#e62334"/>
<rect x="201" y="253" width="1" height="53" fill="#0eb058"/>
<rect x="199" y="288" width="5" height="18" fill="#0eb058"/>
<rect x="207" y="237" width="1" height="28" fill="#e62334"/>
<rect x="205" y="245" width="5" height="20" fill="#e62334"/>
<rect x="213" y="216" width="1" height="26" fill="#0eb058"/>
<rect x="211" y="216" width="5" height="26" fill="#0eb058"/>
<rect x="219" y="212" width="1" height="31" fill="#e62334"/>
<rect x="217" y="225" width="5" height="16" fill="#e62334"/>
<rect x="225" y="213" width="1" height="25" fill="#0eb058"/>
<rect x="223" y="213" width="5" height="25" fill="#0eb058"/>
<rect x="231" y="186" width="1" height="21" fill="#0eb058"/>
<rect x="229" y="196" width="5" height="11" fill="#0eb058"/>
<rect x="237" y="184" width="1" height="12" fill="#0eb058"/>
<rect x="235" y="190" width="5" height="1" fill="#0eb058"/>
<rect x="243" y="186" width="1" height="19" fill="#0eb058"/>
<rect x="241" y="193" width="5" height="12" fill="#0eb058"/>
<rect x="249" y="156" width="1" height="40" fill="#0eb058"/>
<rect x="247" y="162" width="5" height="34" fill="#0eb058"/>
<rect x="255" y="160" width="1" height="24" fill="#e62334"/>
<rect x="253" y="162" width="5" height="14" fill="#e62334"/>
<rect x="261" y="183" width="1" height="39" fill="#e62334"/>
<rect x="259" y="184" width="5" height="38" fill="#e62334"/>
<rect x="267" y="232" width="1" height="28" fill="#e62334"/>
<rect x="265" y="232" width="5" height="4" fill="#e62334"/>
<rect x="273" y="218" width="1" height="33" fill="#0eb058"/>
<rect x="271" y="221" width="5" height="30" fill="#0eb058"/>
<rect x="279" y="218" width="1" height="56" fill="#e62334"/>
<rect x="277" y="218" width="5" height="42" fill="#e62334"/>
<rect x="285" y="271" width="1" height="25" fill="#0eb058"/>
<rect x="283" y="271" width="5" height="4" fill="#0eb058"/>
<rect x="291" y="269" width="1" height="32" fill="#0eb058"/>
<rect x="289" y="270" width="5" height="11" fill="#0eb058"/>
<rect x="297" y="291" width="1" height="11" fill="#0eb058"/>
<rect x="295" y="295" width="5" height="5" fill="#0eb058"/>
<rect x="303" y="288" width="1" height="30" fill="#e62334"/>
<rect x="301" y="289" width="5" height="19" fill="#e62334"/>
<rect x="309" y="291" width="1" height="23" fill="#e62334"/>
<rect x="307" y="307" width="5" height="1" fill="#e62334"/>
<rect x="315" y="275" width="1" height="21" fill="#e62334"/>
<rect x="313" y="284" width="5" height="1" fill="#e62334"/>
<rect x="321" y="290" width="1" height="20" fill="#e62334"/>
<rect x="319" y="290" width="5" height="13" fill="#e62334"/>
<rect x="327" y="298" width="1" height="31" fill="#e62334"/>
<rect x="325" y="302" width="5" height="14" fill="#e62334"/>
<rect x="333" y="321" width="1" height="25" fill="#e62334"/>
<rect x="331" y="338" width="5" height="8" fill="#e62334"/>
<rect x="339" y="338" width="1" height="26" fill="#e62334"/>
<rect x="337" y="346" width="5" height="12" fill="#e62334"/>
<rect x="345" y="343" width="1" height="16" fill="#0eb058"/>
<rect x="343" y="354" width="5" height="5" fill="#0eb058"/>
<rect x="351" y="327" width="1" height="17" fill="#0eb058"/>
<rect x="349" y="334" width="5" height="10" fill="#0eb058"/>
<rect x="357" y="342" width="1" height="18" fill="#e62334"/>
<rect x="355" y="346" width="5" height="13" fill="#e62334"/>
<rect x="363" y="338" width="1" height="30" fill="#e62334"/>
<rect x="361" y="357" width="5" height="3" fill="#e62334"/>
<rect x="369" y="332" width="1" height="38" fill="#0eb058"/>
<rect x="367" y="332" width="5" height="38" fill="#0eb058"/>
<rect x="375" y="314" width="1" height="31" fill="#e62334"/>
<rect x="373" y="321" width="5" height="22" fill="#e62334"/>
<rect x="381" y="304" width="1" height="30" fill="#0eb058"/>
<rect x="379" y="313" width="5" height="21" fill="#0eb058"/>
<rect x="387" y="295" width="1" height="44" fill="#e62334"/>
<rect x="385" y="302" width="5" height="32" fill="#e62334"/>
<rect x="393" y="273" width="1" height="39" fill="#0eb058"/>
<rect x="391" y="277" width="5" height="35" fill="#0eb058"/>
<rect x="399" y="260" width="1" height="41" fill="#0eb058"/>
<rect x="397" y="260" width="5" height="21" fill="#0eb058"/>
<rect x="405" y="277" width="1" height="40" fill="#e62334"/>
<rect x="403" y="280" width="5" height="37" fill="#e62334"/>
<rect x="411" y="317" width="1" height="43" fill="#e62334"/>
<rect x="409" y="323" width="5" height="37" fill="#e62334"/>
<rect x="417" y="333" width="1" height="31" fill="#e62334"/>
<rect x="415" y="342" width="5" height="4" fill="#e62334"/>
<rect x="423" y="330" width="1" height="25" fill="#e62334"/>
<rect x="421" y="335" width="5" height="8" fill="#e62334"/>
<rect x="429" y="345" width="1" height="38" fill="#e62334"/>
<rect x="427" y="354" width="5" height="19" fill="#e62334"/>
<rect x="435" y="362" width="1" height="27" fill="#e62334"/>
<rect x="433" y="377" width="5" height="9" fill="#e62334"/>
<rect x="441" y="363" width="1" height="17" fill="#e62334"/>
<rect x="439" y="377" width="5" height="3" fill="#e62334"/>
<rect x="447" y="363" width="1" height="42" fill="#e62334"/>
<rect x="445" y="375" width="5" height="19" fill="#e62334"/>
<rect x="453" y="361" width="1" height="44" fill="#0eb058"/>
<rect x="451" y="373" width="5" height="32" fill="#0eb058"/>
<rect x="459" y="349" width="1" height="33" fill="#e62334"/>
<rect x="457" y="354" width="5" height="18" fill="#e62334"/>
<rect x="465" y="384" width="1" height="24" fill="#e62334"/>
<rect x="463" y="385" width="5" height="15" fill="#e62334"/>
<rect x="471" y="392" width="1" height="15" fill="#e62334"/>
<rect x="469" y="394" width="5" height="11" fill="#e62334"/>
<rect x="477" y="382" width="1" height="23" fill="#0eb058"/>
<rect x="475" y="386" width="5" height="19" fill="#0eb058"/>
<rect x="483" y="385" width="1" height="43" fill="#e62334"/>
<rect x="481" y="394" width="5" height="22" fill="#e62334"/>
<rect x="489" y="406" width="1" height="44" fill="#0eb058"/>
<rect x="487" y="415" width="5" height="13" fill="#0eb058"/>
<rect x="495" y="382" width="1" height="55" fill="#0eb058"/>
<rect x="493" y="390" width="5" height="33" fill="#0eb058"/>
<rect x="501" y="372" width="1" height="54" fill="#e62334"/>
<rect x="499" y="381" width="5" height="37" fill="#e62334"/>
<rect x="507" y="410" width="1" height="29" fill="#e62334"/>
<rect x="505" y="420" width="5" height="10" fill="#e62334"/>
<rect x="513" y="421" width="1" height="16" fill="#0eb058"/>
<rect x="511" y="432" width="5" height="5" fill="#0eb058"/>
<rect x="519" y="406" width="1" height="51" fill="#0eb058"/>
<rect x="517" y="411" width="5" height="18" fill="#0eb058"/>
<rect x="525" y="403" width="1" height="42" fill="#0eb058"/>
<rect x="523" y="407" width="5" height="13" fill="#0eb058"/>
<rect x="531" y="401" width="1" height="17" fill="#0eb058"/>
<rect x="529" y="408" width="5" height="1" fill="#0eb058"/>
<rect x="537" y="358" width="1" height="49" fill="#0eb058"/>
<rect x="535" y="368" width="5" height="39" fill="#0eb058"/>
<rect x="543" y="367" width="1" height="24" fill="#e62334"/>
<rect x="541" y="373" width="5" height="5" fill="#e62334"/>
<rect x="549" y="339" width="1" height="48" fill="#0eb058"/>
<rect x="547" y="366" width="5" height="11" fill="#0eb058"/>
<rect x="555" y="331" width="1" height="35" fill="#0eb058"/>
<rect x="553" y="348" width="5" height="12" fill="#0eb058"/>
<rect x="561" y="335" width="1" height="37" fill="#e62334"/>
<rect x="559" y="346" width="5" height="19" fill="#e62334"/>
<rect x="567" y="351" width="1" height="31" fill="#e62334"/>
<rect x="565" y="363" width="5" height="13" fill="#e62334"/>
<rect x="573" y="360" width="1" height="39" fill="#e62334"/>
<rect x="571" y="373" width="5" height="20" fill="#e62334"/>
<rect x="579" y="390" width="1" height="40" fill="#e62334"/>
<rect x="577" y="399" width="5" height="25" fill="#e62334"/>
<rect x="585" y="422" width="1" height="14" fill="#e62334"/>
<rect x="583" y="430" width="5" height="1" fill="#e62334"/>
<rect x="591" y="420" width="1" height="24" fill="#e62334"/>
<rect x="589" y="430" width="5" height="10" fill="#e62334"/>
<rect x="597" y="423" width="1" height="19" fill="#0eb058"/>
<rect x="595" y="429" width="5" height="11" fill="#0eb058"/>
<rect x="603" y="413" width="1" height="25" fill="#0eb058"/>
<rect x="601" y="428" width="5" height="3" fill="#0eb058"/>
<rect x="609" y="401" width="1" height="30" fill="#0eb058"/>
<rect x="607" y="412" width="5" height="12" fill="#0eb058"/>
<rect x="615" y="373" width="1" height="37" fill="#0eb058"/>
<rect x="613" y="378" width="5" height="32" fill="#0eb058"/>
<rect x="621" y="369" width="1" height="32" fill="#e62334"/>
<rect x="619" y="374" width="5" height="27" fill="#e62334"/>
<rect x="627" y="384" width="1" height="17" fill="#0eb058"/>
<rect x="625" y="391" width="5" height="5" fill="#0eb058"/>
<rect x="633" y="360" width="1" height="29" fill="#0eb058"/>
<rect x="631" y="365" width="5" height="22" fill="#0eb058"/>
<rect x="639" y="362" width="1" height="20" fill="#0eb058"/>
<rect x="637" y="364" width="5" height="8" fill="#0eb058"/>
<rect x="645" y="383" width="1" height="47" fill="#e62334"/>
<rect x="643" y="388" width="5" height="31" fill="#e62334"/>
<rect x="651" y="397" width="1" height="30" fill="#e62334"/>
<rect x="649" y="409" width="5" height="6" fill="#e62334"/>
<rect x="657" y="376" width="1" height="35" fill="#0eb058"/>
<rect x="655" y="392" width="5" height="7" fill="#0eb058"/>
<rect x="663" y="379" width="1" height="38" fill="#e62334"/>
<rect x="661" y="379" width="5" height="36" fill="#e62334"/>
<rect x="669" y="417" width="1" height="22" fill="#e62334"/>
<rect x="667" y="419" width="5" height="13" fill="#e62334"/>
<rect x="675" y="396" width="1" height="37" fill="#0eb058"/>
<rect x="673" y="399" width="5" height="32" fill="#0eb058"/>
<rect x="681" y="387" width="1" height="57" fill="#e62334"/>
<rect x="679" y="398" width="5" height="29" fill="#e62334"/>
<rect x="687" y="422" width="1" height="32" fill="#e62334"/>
<rect x="685" y="436" width="5" height="18" fill="#e62334"/>
<rect x="693" y="379" width="1" height="67" fill="#0eb058"/>
<rect x="691" y="393" width="5" height="53" fill="#0eb058"/>
<rect x="699" y="400" width="1" height="42" fill="#e62334"/>
<rect x="697" y="404" width="5" height="29" fill="#e62334"/>
<rect x="705" y="419" width="1" height="50" fill="#e62334"/>
<rect x="703" y="427" width="5" height="32" fill="#e62334"/>
<rect x="711" y="438" width="1" height="30" fill="#0eb058"/>
<rect x="709" y="448" width="5" height="13" fill="#0eb058"/>
<rect x="717" y="430" width="1" height="37" fill="#e62334"/>
<rect x="715" y="448" width="5" height="11" fill="#e62334"/>
<rect x="723" y="413" width="1" height="62" fill="#e62334"/>
<rect x="721" y="457" width="5" height="12" fill="#e62334"/>
<rect x="729" y="455" width="1" height="33" fill="#0eb058"/>
<rect x="727" y="459" width="5" height="17" fill="#0eb058"/>
<rect x="735" y="447" width="1" height="30" fill="#e62334"/>
<rect x="733" y="456" width="5" height="9" fill="#e62334"/>
<rect x="741" y="470" width="1" height="40" fill="#e62334"/>
<rect x="739" y="471" width="5" height="32" fill="#e62334"/>
<rect x="747" y="495" width="1" height="37" fill="#e62334"/>
<rect x="745" y="508" width="5" height="14" fill="#e62334"/>
<rect x="753" y="488" width="1" height="42" fill="#0eb058"/>
<rect x="751" y="497" width="5" height="33" fill="#0eb058"/>
<rect x="759" y="468" width="1" height="34" fill="#0eb058"/>
<rect x="757" y="474" width="5" height="24" fill="#0eb058"/>
<rect x="765" y="469" width="1" height="50" fill="#e62334"/>
<rect x="763" y="476" width="5" height="33" fill="#e62334"/>
<rect x="771" y="480" width="1" height="26" fill="#0eb058"/>
<rect x="769" y="494" width="5" height="8" fill="#0eb058"/>
<rect x="777" y="443" width="1" height="47" fill="#0eb058"/>
<rect x="775" y="472" width="5" height="18" fill="#0eb058"/>
<rect x="783" y="440" width="1" height="29" fill="#0eb058"/>
<rect x="781" y="457" width="5" height="12" fill="#0eb058"/>
<rect x="789" y="430" width="1" height="20" fill="#0eb058"/>
<rect x="787" y="431" width="5" height="19" fill="#0eb058"/>
<rect x="795" y="435" width="1" height="22" fill="#e62334"/>
<rect x="793" y="437" width="5" height="16" fill="#e62334"/>
<rect x="801" y="453" width="1" height="20" fill="#e62334"/>
<rect x="799" y="453" width="5" height="15" fill="#e62334"/>
<rect x="807" y="450" width="1" height="31" fill="#e62334"/>
<rect x="805" y="459" width="5" height="20" fill="#e62334"/>
<rect x="813" y="462" width="1" height="18" fill="#0eb058"/>
<rect x="811" y="472" width="5" height="1" fill="#0eb058"/>
<rect x="819" y="462" width="1" height="39" fill="#e62334"/>
<rect x="817" y="472" width="5" height="18" fill="#e62334"/>
<rect x="825" y="427" width="1" height="59" fill="#0eb058"/>
<rect x="823" y="436" width="5" height="50" fill="#0eb058"/>
<rect x="831" y="419" width="1" height="36" fill="#e62334"/>
<rect x="829" y="430" width="5" height="13" fill="#e62334"/>
<rect x="837" y="448" width="1" height="35" fill="#e62334"/>
<rect x="835" y="452" width="5" height="24" fill="#e62334"/>
<rect x="843" y="474" width="1" height="17" fill="#e62334"/>
<rect x="841" y="480" width="5" height="9" fill="#e62334"/>
<rect x="849" y="467" width="1" height="21" fill="#0eb058"/>
<rect x="847" y="474" width="5" height="13" fill="#0eb058"/>
<rect x="855" y="474" width="1" height="24" fill="#e62334"/>
<rect x="853" y="479" width="5" height="9" fill="#e62334"/>
<rect x="861" y="478" width="1" height="46" fill="#e62334"/>
<rect x="859" y="491" width="5" height="33" fill="#e62334"/>
<rect x="867" y="506" width="1" height="22" fill="#0eb058"/>
<rect x="865" y="508" width="5" height="3" fill="#0eb058"/>
<rect x="873" y="488" width="1" height="31" fill="#0eb058"/>
<rect x="871" y="495" width="5" height="12" fill="#0eb058"/>
<rect x="879" y="492" width="1" height="36" fill="#e62334"/>
<rect x="877" y="499" width="5" height="12" fill="#e62334"/>
<rect x="885" y="519" width="1" height="48" fill="#e62334"/>
<rect x="883" y="525" width="5" height="29" fill="#e62334"/>
<rect x="891" y="542" width="1" height="21" fill="#0eb058"/>
<rect x="889" y="548" width="5" height="3" fill="#0eb058"/>
<rect x="897" y="540" width="1" height="26" fill="#e62334"/>
<rect x="895" y="543" width="5" height="23" fill="#e62334"/>
</g>
<g shape-rendering="crispEdges">
<line x1="24" x2="871" y1="156.5" y2="156.5" stroke="#97979f" stroke-width="1" stroke-dasharray="1 2"/>
<line x1="24" x2="959" y1="233.5" y2="233.5" stroke="#b0b1b9" stroke-width="1" stroke-dasharray="5 6"/>
<line x1="531.5" x2="531.5" y1="66" y2="702" stroke="#b0b1b9" stroke-width="1" stroke-dasharray="5 6"/>
<line x1="24" x2="910" y1="566.5" y2="566.5" stroke="#ee2338" stroke-width="1" stroke-dasharray="1 2"/>
<line x1="24" x2="881" y1="567.5" y2="567.5" stroke="#7f9096" stroke-width="1" stroke-dasharray="1 2"/>
</g>
<path d="M715.5,340.5 C745,342 775,346 800,355.5 C830,368 847,388 858,411 C866,428 870,445 872.8,457.5" fill="none" stroke="#fff" stroke-width="2" stroke-linecap="round"/>
<path d="M848,453.3 C856,460.5 866,469 874,473.5 C880,476.5 885,472 888,464.5 C890.5,457 891,449 890.8,440.9" fill="none" stroke="#fff" stroke-width="2" stroke-linecap="round"/>
<path d="M812,543.5 C824,548 834,557 842.5,569.7 C848,578 852,585 855.2,590.5" fill="none" stroke="#fff" stroke-width="2" stroke-linecap="round"/>
<path d="M843.3,601.4 C848,604 852,605.5 856,602.5 C861,598 863,588 865.4,577.4" fill="none" stroke="#fff" stroke-width="2" stroke-linecap="round"/>
<circle cx="867.5" cy="571.4" r="3.4" fill="#181818" stroke="#2a52c9" stroke-width="1.4"/>
<circle cx="839.6" cy="597.2" r="3.4" fill="#181818" stroke="#2a52c9" stroke-width="1.4"/>
</g>
<line x1="24" x2="959" y1="702.5" y2="702.5" stroke="#22212c" stroke-width="1" shape-rendering="crispEdges"/>
</svg>
<svg class="abs" style="left:0;top:0" width="1063" height="739" viewBox="0 0 1063 739" fill="none" stroke="#d1d4dc" stroke-width="1.3">
<!-- title bar icons -->
<g stroke="none" fill="#7d7d7d">
<path d="M1034.5,3 h9 l-4.5,5.6z"/>
<rect x="1057" y="10" width="6" height="1.6"/>
<path d="M145,4.800 h10.200 l-5.100,5.800z" fill="#fff"/>
<ellipse cx="976" cy="6" rx="5.2" ry="4.6"/><path d="M972,9 l-1.5,3 4,-1.5z"/><ellipse cx="981" cy="10" rx="3.6" ry="3"/><path d="M983,12 l2,2 -4,-0.5z"/>
</g>
<g stroke="#7d7d7d" stroke-width="1.3">
<rect x="994.5" y="6.2" width="8" height="4.6" rx="2.3" transform="rotate(-45 998.5 8.5)"/>
<rect x="1000" y="1.2" width="8" height="4.6" rx="2.3" transform="rotate(-45 1004 3.5)"/>
<path d="M1017,12 l4.500,-4.500" /><path d="M1019.300,5.200 l4.700,4.700 1.200,-1.200 -0.600,-1.600 2.600,-2.600 0.900,0.300 -3.800,-3.800 0.300,0.900 -2.600,2.600 -1.600,-0.600z" fill="#7d7d7d" stroke-width="0.600"/>
</g>
<!-- toolbar icons -->
<g>
<rect x="27.700" y="37" width="4.200" height="12.500" rx="0.500"/><path d="M29.800,33.200 v3.800 M29.800,49.500 v3.200"/>
<rect x="35.800" y="39.600" width="4" height="8.200" rx="0.500"/><path d="M37.800,36.800 v2.800 M37.800,47.800 v3"/>
<path d="M74,50.5 c2.5,0.5 3.5,-1 4,-4 l1.2,-7 c0.5,-3 1.8,-4.2 4,-3.5 M76,41.5 h7" />
<path d="M81.5,46 l4.5,4.5 M86,46 l-4.5,4.5"/>
<rect x="184.5" y="36" width="6" height="5.5" rx="1.3"/><rect x="193.5" y="36" width="6" height="5.5" rx="1.3"/><rect x="184.5" y="44.5" width="6" height="5.5" rx="1.3"/><rect x="193.5" y="44.5" width="6" height="5.5" rx="1.3"/>
</g>
<g fill="#d1d4dc" stroke="none">
<path d="M230.5,37.5 a1,1 0 0 1 1,-1 h9 l3,3 v9 a1,1 0 0 1 -1,1 h-11 a1,1 0 0 1 -1,-1z M233,38 v3.5 h6.5 v-3.5z M233,44.5 v3.5 h8 v-3.5z" fill-rule="evenodd"/>
<path d="M277.5,38 a1,1 0 0 1 1,-1 h4.500 l1.500,1.800 h6 a1,1 0 0 1 1,1 v8.500 a1,1 0 0 1 -1,1 h-12 a1,1 0 0 1 -1,-1z"/>
</g>
<circle cx="331" cy="43" r="7.2" stroke-width="1.5"/>
<circle cx="378.600" cy="43" r="7.2" stroke-width="1.2"/>
<path d="M378.600,41.500 v5.500 M377.300,41.800 h1.300 M377,47 h3.200" stroke-width="1.2"/><circle cx="378.600" cy="38.800" r="0.900" fill="#d1d4dc" stroke="none"/>
<path d="M328.800,41 c0,-3.200 4.600,-3.200 4.600,-0.300 c0,1.800 -2.200,1.800 -2.200,3.800" stroke-width="1.500"/><circle cx="331.200" cy="47" r="1" fill="#d1d4dc" stroke="none"/>
<path d="M425,37.500 l-4,4 4,4 M421,41.500 h7.500 c3,0 4.500,2 4.500,5.500" stroke-width="1.400"/>
<path d="M466.500,37.500 l4,4 -4,4 M470.500,41.500 h-7.500 c-3,0 -4.500,2 -4.500,5.500" stroke="#4c4f5a" stroke-width="1.400"/>
<circle cx="1058" cy="42.500" r="7" stroke-width="1.400"/><path d="M1061,32 l-4.500,8 h3.200 l-1.800,6 6,-8.500 h-3.200 l2.300,-5.500z" fill="#f0f0f0" stroke="#181818" stroke-width="1.200"/>
<!-- left toolbar partial icons -->
<g stroke="#c8c8d0" stroke-width="1.2">
<path d="M0,90.500 h6"/>
<path d="M0,118 l1,-0.300"/><circle cx="2.800" cy="117.300" r="1.900"/>
<path d="M0,151.500 h5 M0,158.700 h2.300 M0,164.800 h5 M0,170.700 h5"/><circle cx="4.300" cy="158.700" r="1.900"/>
<path d="M1.200,192.500 l2,9"/><circle cx="0.700" cy="190.600" r="1.900"/><circle cx="3.600" cy="203.500" r="1.900"/>
<path d="M0,226.500 h2 M0,242.500 h2"/><circle cx="2.600" cy="236.300" r="1.800"/>
<path d="M0,297.500 c1,0 1.500,0.500 1.500,2.500"/>
<circle cx="-4.200" cy="342" r="9"/>
<path d="M0,378.400 l6.200,6.200 -6.200,5.800"/>
<path d="M0,428 l3,4"/>
<path d="M0,472.500 c2.500,0 3.500,1.500 3.500,4.500 M0,478.500 h4"/>
<path d="M0,511 h4 v7 h-4 M0,507.500 c1.800,0 2.800,1 2.800,3.500"/>
<path d="M0,545 h3 v11 h-3"/>
<path d="M0,578 l2.500,4 M1,588 l1.500,-2.500 1,2.500"/>
<path d="M3,627 v14 M0,627.500 h3" stroke-width="2"/>
</g>
<path d="M0,269 l7.700,-7.200" stroke="#2196f3" stroke-width="1.600"/>
<g stroke="#3a3c47" stroke-width="1"><path d="M0,366.500 h12 M0,451.500 h12 M0,608.500 h12"/></g>
<path d="M43.300,180.500 l4,-3.800 4,3.800" stroke="#d1d4dc" stroke-width="1.500"/>
<!-- hex settings icon -->
<path d="M1010.500,717.500 h8 l4,7 -4,7 h-8 l-4,-7z" stroke="#b8b8c0" stroke-width="1.200"/><circle cx="1014.500" cy="724.500" r="2" stroke="#b8b8c0" stroke-width="1.200"/>
</svg>

<div class="bx" style="left:33px;top:168px;width:29px;height:20px;border:1px solid #3a3e4b;border-radius:3px"></div>
<span class="t" id="t19" style="left:973.10px;top:78.06px;font-size:18.6px;line-height:18.6px;font-weight:normal;color:#f0f0f0;letter-spacing:0.537px;-webkit-text-stroke:0.45px #f0f0f0">140.00</span>
<span class="t" id="t20" style="left:973.10px;top:161.06px;font-size:18.6px;line-height:18.6px;font-weight:normal;color:#f0f0f0;letter-spacing:0.537px;-webkit-text-stroke:0.45px #f0f0f0">138.00</span>
<span class="t" id="t21" style="left:973.10px;top:245.06px;font-size:18.6px;line-height:18.6px;font-weight:normal;color:#f0f0f0;letter-spacing:0.537px;-webkit-text-stroke:0.45px #f0f0f0">136.00</span>
<span class="t" id="t22" style="left:973.10px;top:329.06px;font-size:18.6px;line-height:18.6px;font-weight:normal;color:#f0f0f0;letter-spacing:0.537px;-webkit-text-stroke:0.45px #f0f0f0">134.00</span>
<span class="t" id="t23" style="left:973.10px;top:614.06px;font-size:18.6px;line-height:18.6px;font-weight:normal;color:#f0f0f0;letter-spacing:0.537px;-webkit-text-stroke:0.45px #f0f0f0">127.50</span>
<span class="t" id="t24" style="left:973.10px;top:668.06px;font-size:18.6px;line-height:18.6px;font-weight:normal;color:#f0f0f0;letter-spacing:0.537px;-webkit-text-stroke:0.45px #f0f0f0">126.50</span>
<div class="bx" style="left:1040px;top:571px;width:23px;height:36px;background:#1e2a52"></div>
<div class="bx" style="left:960px;top:382px;width:81px;height:29px;background:#2196f3"></div>
<div class="bx" style="left:960px;top:411px;width:81px;height:28px;background:#2196f3"></div>
<div class="bx" style="left:960px;top:439px;width:81px;height:28px;background:#ff6d00"></div>
<div class="bx" style="left:960px;top:467px;width:81px;height:28px;background:#ffffff"></div>
<div class="bx" style="left:960px;top:495px;width:81px;height:29px;background:#ffeb3b"></div>
<div class="bx" style="left:960px;top:524px;width:81px;height:28px;background:#2196f3"></div>
<div class="bx" style="left:960px;top:552px;width:81px;height:28px;background:#e62032"></div>
<div class="bx" style="left:960px;top:580px;width:81px;height:29px;background:#162c5c"></div>
<div class="bx" style="left:960px;top:142px;width:81px;height:29px;background:#162c5c;border-radius:0 2px 2px 0"></div>
<div class="bx" style="left:960px;top:216px;width:81px;height:35px;background:#363a45;border-radius:2px"></div>
<div class="bx" style="left:960px;top:649px;width:103px;height:28px;background:#e62032"></div>
<div class="bx" style="left:871px;top:142px;width:88px;height:29px;background:#162c5c;border-radius:2px 0 0 2px"></div>
<div class="bx" style="left:910px;top:552px;width:49px;height:28px;background:#e62032;border-radius:2px 0 0 2px"></div>
<div class="bx" style="left:881px;top:580px;width:78px;height:29px;background:#162c5c;border-radius:2px 0 0 2px"></div>
<div class="bx" style="left:838px;top:702px;width:28px;height:37px;background:#1e2a52"></div>
<div class="bx" style="left:472px;top:702px;width:120px;height:36px;background:#363a45;border-radius:2px"></div>
<div class="bx" style="left:351px;top:77px;width:324px;height:38px;background:#1e222d;border-radius:7px"></div>
<svg class="abs" style="left:0;top:0" width="1063" height="739" viewBox="0 0 1063 739" fill="none" stroke="#d1d4dc" stroke-width="1.3">
<g fill="#4a4e5a" stroke="none">
<circle cx="361" cy="91" r="0.900"/><circle cx="365.500" cy="91" r="0.900"/><circle cx="361" cy="96" r="0.900"/><circle cx="365.500" cy="96" r="0.900"/><circle cx="361" cy="101" r="0.900"/><circle cx="365.500" cy="101" r="0.900"/>
</g>
<rect x="387" y="88.500" width="5.500" height="5.500" rx="1.300"/><rect x="395.500" y="88.500" width="5.500" height="5.500" rx="1.300"/><rect x="387" y="97" width="5.500" height="5.500" rx="1.300"/><path d="M398.300,97 v6 M395.300,100 h6"/>
<path d="M425.500,99.500 l1,-4 9,-9 a1.500,1.500 0 0 1 3,3 l-9,9z M433.500,88.500 l3,3 M426.500,95.500 l3,3"/>
<rect x="421.500" y="104.500" width="22" height="3.200" rx="1.600" fill="#fff" stroke="none"/>
<path d="M461.500,96 h17.500" stroke-width="2"/>
<circle cx="542.200" cy="96" r="2.600"/>
<path d="M540.700,86.800 h3 l0.600,2.300 1.900,0.800 2.100,-1.200 2.100,2.100 -1.200,2.100 0.800,1.900 2.300,0.600 v3 l-2.300,0.600 -0.800,1.900 1.200,2.100 -2.100,2.100 -2.100,-1.200 -1.900,0.800 -0.600,2.300 h-3 l-0.600,-2.300 -1.900,-0.800 -2.100,1.200 -2.100,-2.100 1.200,-2.100 -0.800,-1.900 -2.300,-0.600 v-3 l2.300,-0.600 0.800,-1.900 -1.200,-2.100 2.100,-2.100 2.100,1.200 1.900,-0.800z"/>
<rect x="573" y="95" width="13.500" height="9.500" rx="1.500"/><path d="M576.500,95 v-3 a3.300,3.300 0 0 1 6.600,-0.800"/><rect x="578.700" y="98.500" width="2.200" height="2.600" fill="#d1d4dc" stroke="none"/>
<path d="M611,91 h15 M615.500,91 v-2.500 h6 v2.500 M613,91 l0.700,13 h9.600 l0.700,-13 M616.500,94.500 v7 M620.500,94.500 v7"/>
<circle cx="650.500" cy="96" r="2.200"/><circle cx="656.700" cy="96" r="2.200"/><circle cx="662.900" cy="96" r="2.200"/>
</svg>

<div class="bx" style="left:13px;top:677px;width:18px;height:53px;border:2px solid #23222d;border-radius:9px;background:#181818"></div>
<svg class="abs" style="left:0;top:0" width="1063" height="739"><path d="M24,697.5 L19.5,704 L24,710.5" fill="none" stroke="#c8c8d0" stroke-width="1.6"/></svg>
<span class="t" id="t0" style="left:-1.60px;top:2.62px;font-size:12.5px;line-height:12.5px;font-weight:bold;color:#fff;letter-spacing:0.286px">GBL Jun06'24 @EUREX</span>
<span class="t" id="t1" style="left:95.90px;top:35.58px;font-size:15.5px;line-height:15.5px;font-weight:normal;color:#d6d8e0;letter-spacing:0.439px">Indicatori</span>
<span class="t" id="t2" style="left:32.80px;top:74.76px;font-size:16px;line-height:16px;font-weight:normal;color:#e8e8e8;letter-spacing:0.277px">GBL JUN24 Futures · 1D · EUREX</span>
<span class="t" id="t3" style="left:296.10px;top:75.97px;font-size:13.5px;line-height:13.5px;font-weight:normal;color:#e6e6e6;letter-spacing:0.652px;-webkit-text-stroke:0.55px #e6e6e6">O - Aper</span>
<span class="t" id="t4" style="left:674.10px;top:76.07px;font-size:13.5px;line-height:13.5px;font-weight:normal;color:#e6e6e6;letter-spacing:0.292px;-webkit-text-stroke:0.55px #e6e6e6">s.</span>
<span class="t" id="t5" style="left:686.20px;top:76.00px;font-size:13px;line-height:13px;font-weight:normal;color:#1fae5c;letter-spacing:1.006px">132.37</span>
<span class="t" id="t6" style="left:737.60px;top:76.07px;font-size:13.5px;line-height:13.5px;font-weight:normal;color:#e6e6e6;letter-spacing:0.706px;-webkit-text-stroke:0.55px #e6e6e6">Vol</span>
<span class="t" id="t7" style="left:758.20px;top:76.00px;font-size:13px;line-height:13px;font-weight:normal;color:#1fae5c;letter-spacing:1.129px">214.765K</span>
<span class="t" id="t8" style="left:32.80px;top:100.17px;font-size:13.5px;line-height:13.5px;font-weight:normal;color:#e6e6e6;letter-spacing:0.478px;-webkit-text-stroke:0.55px #e6e6e6">Volume SMA 9</span>
<span class="t" id="t9" style="left:135.20px;top:100.30px;font-size:13px;line-height:13px;font-weight:normal;color:#1fae5c;letter-spacing:0.904px">214.765K</span>
<span class="t" id="t10" style="left:32.80px;top:123.87px;font-size:13.5px;line-height:13.5px;font-weight:normal;color:#e6e6e6;letter-spacing:0.577px;-webkit-text-stroke:0.55px #e6e6e6">Incrocio MA/EMA 10 10</span>
<span class="t" id="t11" style="left:193.70px;top:124.30px;font-size:13px;line-height:13px;font-weight:normal;color:#f0f0f0;letter-spacing:1.039px">132.29</span>
<span class="t" id="t12" style="left:245.90px;top:124.30px;font-size:13px;line-height:13px;font-weight:normal;color:#ffe53b;letter-spacing:1.039px">132.37</span>
<span class="t" id="t13" style="left:297.10px;top:124.30px;font-size:13px;line-height:13px;font-weight:normal;color:#9a9a9a;letter-spacing:0.400px">∅</span>
<span class="t" id="t14" style="left:32.80px;top:148.17px;font-size:13.5px;line-height:13.5px;font-weight:normal;color:#e6e6e6;letter-spacing:0.536px;-webkit-text-stroke:0.55px #e6e6e6">BB 20 2</span>
<span class="t" id="t15" style="left:93.00px;top:148.30px;font-size:13px;line-height:13px;font-weight:normal;color:#f57c00;letter-spacing:0.922px">132.70</span>
<span class="t" id="t16" style="left:144.80px;top:148.30px;font-size:13px;line-height:13px;font-weight:normal;color:#2196f3;letter-spacing:0.922px">133.83</span>
<span class="t" id="t17" style="left:196.90px;top:148.30px;font-size:13px;line-height:13px;font-weight:normal;color:#2196f3;letter-spacing:0.889px">131.57</span>
<span class="t" id="t18" style="left:486.00px;top:89.33px;font-size:14.5px;line-height:14.5px;font-weight:normal;color:#d1d4dc;letter-spacing:0.970px">2px</span>
<span class="t" id="t25" style="left:974.40px;top:387.96px;font-size:18.6px;line-height:18.6px;font-weight:normal;color:#fff;letter-spacing:0.388px;-webkit-text-stroke:0.45px #fff">132.23</span>
<span class="t" id="t26" style="left:974.40px;top:416.06px;font-size:18.6px;line-height:18.6px;font-weight:normal;color:#fff;letter-spacing:0.388px;-webkit-text-stroke:0.45px #fff">130.90</span>
<span class="t" id="t27" style="left:974.40px;top:444.06px;font-size:18.6px;line-height:18.6px;font-weight:normal;color:#fff;letter-spacing:0.388px;-webkit-text-stroke:0.45px #fff">130.54</span>
<span class="t" id="t28" style="left:974.40px;top:473.36px;font-size:18.6px;line-height:18.6px;font-weight:normal;color:#111;letter-spacing:0.388px;-webkit-text-stroke:0.45px #111">129.91</span>
<span class="t" id="t29" style="left:974.40px;top:501.26px;font-size:18.6px;line-height:18.6px;font-weight:normal;color:#111;letter-spacing:0.388px;-webkit-text-stroke:0.45px #111">129.78</span>
<span class="t" id="t30" style="left:974.40px;top:528.96px;font-size:18.6px;line-height:18.6px;font-weight:normal;color:#fff;letter-spacing:0.388px;-webkit-text-stroke:0.45px #fff">128.86</span>
<span class="t" id="t31" style="left:974.40px;top:557.86px;font-size:18.6px;line-height:18.6px;font-weight:normal;color:#fff;letter-spacing:0.388px;-webkit-text-stroke:0.45px #fff">128.77</span>
<span class="t" id="t32" style="left:974.40px;top:586.06px;font-size:18.6px;line-height:18.6px;font-weight:normal;color:#fff;letter-spacing:0.388px;-webkit-text-stroke:0.45px #fff">128.74</span>
<span class="t" id="t33" style="left:974.40px;top:148.06px;font-size:18.6px;line-height:18.6px;font-weight:normal;color:#fff;letter-spacing:0.388px;-webkit-text-stroke:0.45px #fff">138.33</span>
<span class="t" id="t34" style="left:974.40px;top:225.06px;font-size:18.6px;line-height:18.6px;font-weight:normal;color:#fff;letter-spacing:0.388px;-webkit-text-stroke:0.45px #fff">136.47</span>
<span class="t" id="t35" style="left:974.40px;top:654.06px;font-size:18.6px;line-height:18.6px;font-weight:normal;color:#fff;letter-spacing:0.447px;-webkit-text-stroke:0.45px #fff">319.342K</span>
<span class="t" id="t36" style="left:876.40px;top:148.26px;font-size:18px;line-height:18px;font-weight:normal;color:#fff;letter-spacing:0.312px;-webkit-text-stroke:0.45px #fff">Massimo</span>
<span class="t" id="t37" style="left:917.40px;top:558.26px;font-size:18px;line-height:18px;font-weight:normal;color:#fff;letter-spacing:-0.944px;-webkit-text-stroke:0.45px #fff">GBL</span>
<span class="t" id="t38" style="left:887.40px;top:586.26px;font-size:18px;line-height:18px;font-weight:normal;color:#fff;letter-spacing:0.864px;-webkit-text-stroke:0.45px #fff">Minimo</span>
<span class="t" id="t39" style="left:130.60px;top:713.06px;font-size:18px;line-height:18px;font-weight:bold;color:#f0f0f0;letter-spacing:0.484px">29</span>
<span class="t" id="t40" style="left:244.40px;top:713.06px;font-size:18px;line-height:18px;font-weight:bold;color:#f0f0f0;letter-spacing:1.563px">2024</span>
<span class="t" id="t41" style="left:383.30px;top:713.06px;font-size:18px;line-height:18px;font-weight:bold;color:#f0f0f0;letter-spacing:0.228px">Feb</span>
<span class="t" id="t42" style="left:485.90px;top:713.06px;font-size:18px;line-height:18px;font-weight:bold;color:#f0f0f0;letter-spacing:0.416px">04 Mar '24</span>
<span class="t" id="t43" style="left:630.40px;top:713.06px;font-size:18px;line-height:18px;font-weight:bold;color:#f0f0f0;letter-spacing:0.400px">Apr</span>
<span class="t" id="t44" style="left:753.00px;top:713.06px;font-size:18px;line-height:18px;font-weight:bold;color:#f0f0f0;letter-spacing:-0.100px">Mag</span>
<span class="t" id="t45" style="left:887.70px;top:713.06px;font-size:18px;line-height:18px;font-weight:bold;color:#f0f0f0;letter-spacing:0.267px">Giu</span>
</body></html>
